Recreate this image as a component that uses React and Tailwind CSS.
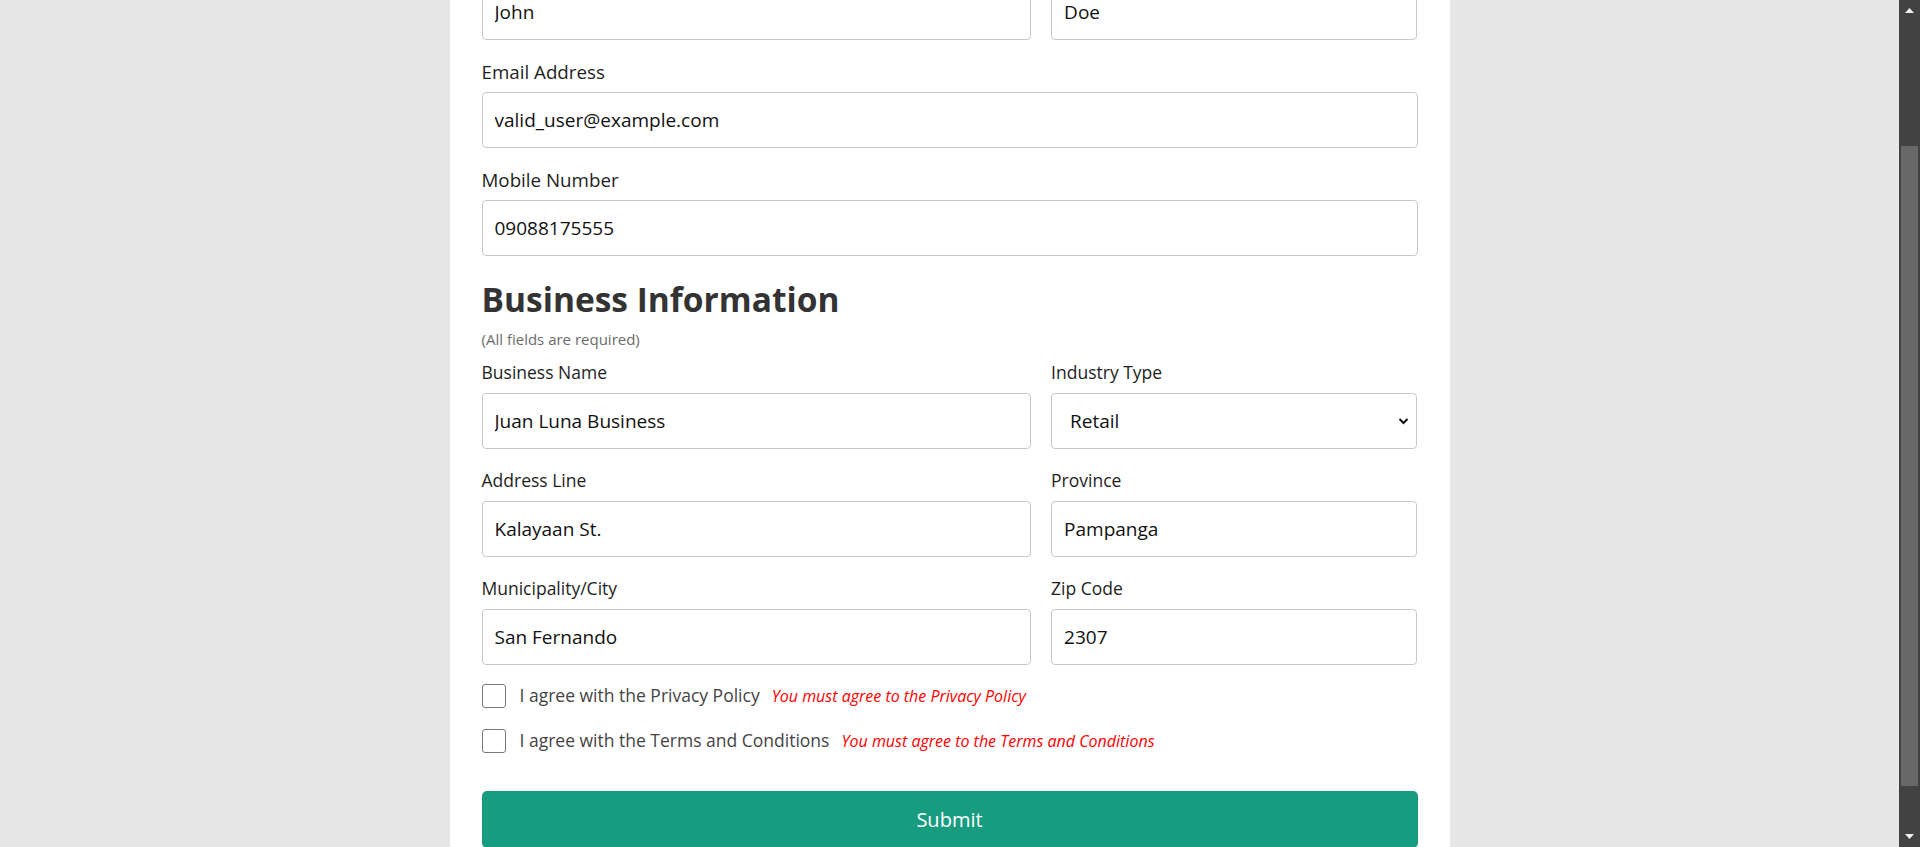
import { useLayoutEffect, useRef } from 'react';

const labelCls = 'block text-[17.5px] leading-[25px] text-[#1e1e1e] mb-2';
const bigLabelCls = 'block text-[18.75px] leading-[25px] text-[#1e1e1e] mb-2';
const inputCls =
  'block w-full h-[56px] rounded-[4px] border border-[#c8c8c8] bg-white px-3 text-[19px] text-[#111] outline-none';

function Field({ label, value, inputRef, big }) {
  return (
    <div>
      <label className={big ? bigLabelCls : labelCls}>{label}</label>
      <input ref={inputRef} className={inputCls} defaultValue={value} />
    </div>
  );
}

function SelectField({ label, value, options }) {
  return (
    <div>
      <label className={labelCls}>{label}</label>
      <div className="relative">
        <select
          defaultValue={value}
          className="block w-full h-[56px] appearance-none rounded-[4px] border border-[#c8c8c8] bg-white pl-[18px] pr-8 text-[19px] text-[#111] outline-none"
        >
          {options.map((o) => (
            <option key={o}>{o}</option>
          ))}
        </select>
        <svg
          className="pointer-events-none absolute right-[8px] top-1/2 -translate-y-1/2"
          width="11"
          height="8"
          viewBox="0 0 11 8"
          fill="none"
        >
          <path d="M1.5 2l4 4 4-4" stroke="#111" strokeWidth="2" />
        </svg>
      </div>
    </div>
  );
}

function Agreement({ text, error }) {
  return (
    <div className="flex items-center">
      <input
        type="checkbox"
        className="h-6 w-6 shrink-0 appearance-none rounded-[3px] border-[1.5px] border-[#7a7a7a] bg-white"
      />
      <div className="ml-[14px] flex items-baseline">
        <span className="text-[17.5px] leading-[24px] text-[#444]">{text}</span>
        <span className="ml-3 text-[16px] italic leading-[24px] text-[#ff0000]">{error}</span>
      </div>
    </div>
  );
}

function Scrollbar() {
  return (
    <div className="flex h-full w-[21px] shrink-0 flex-col bg-[#424242]">
      <div className="flex h-[21px] items-center justify-center">
        <svg width="9" height="5" viewBox="0 0 9 5">
          <path d="M0 5L4.5 0L9 5Z" fill="#f0f0f0" />
        </svg>
      </div>
      <div className="flex-1 px-[2px] pt-[125px] pb-[40px]">
        <div className="h-full bg-[#686868]" />
      </div>
      <div className="flex h-[21px] items-center justify-center">
        <svg width="9" height="5" viewBox="0 0 9 5">
          <path d="M0 0L4.5 5L9 0Z" fill="#f0f0f0" />
        </svg>
      </div>
    </div>
  );
}

export default function App() {
  const viewRef = useRef(null);
  const anchorRef = useRef(null);

  useLayoutEffect(() => {
    const place = () => {
      const view = viewRef.current;
      const anchor = anchorRef.current;
      if (!view || !anchor) return;
      view.scrollTop = 0;
      const offset = anchor.getBoundingClientRect().top - view.getBoundingClientRect().top;
      view.scrollTop = offset - 92;
    };
    place();
    if (document.fonts) document.fonts.ready.then(place);
  }, []);

  return (
    <div className="flex h-[847px] w-full bg-[#e7e7e7] font-['Open_Sans',sans-serif]">
      <div ref={viewRef} className="h-full flex-1 overflow-hidden">
        <div className="mx-auto w-[1000px] bg-white px-8 pt-10 pb-16">
          <h1 className="text-center text-[36px] font-bold leading-[44px] text-[#333]">Create an Account</h1>

          <h2 className="mt-8 text-[33.5px] font-bold leading-[38px] text-[#333]">Personal Information</h2>
          <p className="mt-[11px] text-[15px] leading-[20px] text-[#6c6c6c]">(All fields are required)</p>
          <div className="mt-[11px] flex flex-col gap-[19px]">
            <div className="grid grid-cols-[3fr_2fr] gap-5">
              <Field big label="First Name" value="John" />
              <Field big label="Last Name" value="Doe" />
            </div>
            <Field big label="Email Address" value="valid_user@example.com" inputRef={anchorRef} />
            <Field big label="Mobile Number" value="09088175555" />
          </div>

          <h2 className="mt-6 text-[33.5px] font-bold leading-[38px] text-[#333]">Business Information</h2>
          <p className="mt-[11px] text-[15px] leading-[20px] text-[#6c6c6c]">(All fields are required)</p>
          <div className="mt-[11px] grid grid-cols-[3fr_2fr] gap-x-5 gap-y-[19px]">
            <Field label="Business Name" value="Juan Luna Business" />
            <SelectField
              label="Industry Type"
              value="Retail"
              options={['Retail', 'Food & Beverage', 'Manufacturing', 'Services', 'Agriculture']}
            />
            <Field label="Address Line" value="Kalayaan St." />
            <Field label="Province" value="Pampanga" />
            <Field label="Municipality/City" value="San Fernando" />
            <Field label="Zip Code" value="2307" />
          </div>

          <div className="mt-[18px] flex flex-col gap-5">
            <Agreement text="I agree with the Privacy Policy" error="You must agree to the Privacy Policy" />
            <Agreement
              text="I agree with the Terms and Conditions"
              error="You must agree to the Terms and Conditions"
            />
          </div>

          <button className="mt-[38px] flex h-[57px] w-full items-center justify-center rounded-[5px] bg-[#189c80] text-[20px] font-medium text-white">
            Submit
          </button>

          <p className="mt-6 text-center text-[17.5px] text-[#444]">
            Already have an account? <span className="text-[#189c80]">Log in</span>
          </p>
        </div>
      </div>
      <Scrollbar />
    </div>
  );
}
